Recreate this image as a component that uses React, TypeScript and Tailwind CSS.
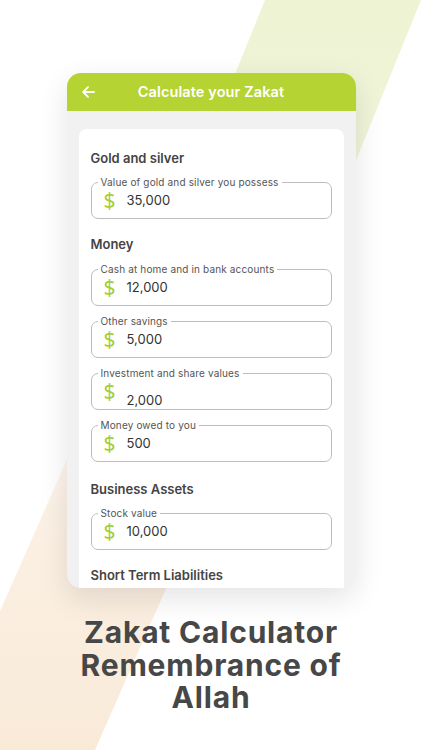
import React from "react";

const font = { fontFamily: "Inter, 'Noto Sans', sans-serif" };

function Dollar() {
  return (
    <span className="text-[21px] leading-none text-[#a6cd37] font-normal" style={{ fontFamily: "'Noto Sans', Inter, sans-serif" }}>
      $
    </span>
  );
}

function Field({ label, value, low, className = "" }: { label: string; value: string; low?: boolean; className?: string }) {
  return (
    <div className={`relative h-[37px] rounded-[7px] border border-[#bdbdbd] flex items-center pl-[12px] ${className}`}>
      <span className="absolute left-[6px] top-[-8px] bg-white px-[3px] text-[10px] leading-[14px] tracking-[0.15px] text-[#555555]">
        {label}
      </span>
      <Dollar />
      <span className={`ml-[11px] text-[13px] text-[#333333] ${low ? "mt-[19px]" : ""}`}>{value}</span>
    </div>
  );
}

function Heading({ children, className = "" }: { children: React.ReactNode; className?: string }) {
  return (
    <div className={`h-[18px] leading-[18px] text-[13px] font-semibold text-[#444444] ${className}`}>{children}</div>
  );
}

export default function App() {
  return (
    <div className="relative w-[422px] h-[750px] overflow-hidden bg-white" style={font}>
      <svg className="absolute inset-0" width="422" height="750" viewBox="0 0 422 750">
        <defs>
          <linearGradient id="g1" x1="0" y1="0" x2="0" y2="1" gradientUnits="objectBoundingBox">
            <stop offset="0" stopColor="#eef3d3" />
            <stop offset="0.45" stopColor="#f1f5dc" />
            <stop offset="1" stopColor="#ffffff" stopOpacity="0" />
          </linearGradient>
          <linearGradient id="g2" x1="0" y1="0" x2="0" y2="1" gradientUnits="objectBoundingBox">
            <stop offset="0" stopColor="#fbeedf" stopOpacity="0" />
            <stop offset="0.3" stopColor="#fbeee0" stopOpacity="0.85" />
            <stop offset="1" stopColor="#f9ead8" />
          </linearGradient>
        </defs>
        <polygon points="265,0 421,0 259,400 103,400" fill="url(#g1)" />
        <polygon points="93,400 249,400 95,750 -61,750" fill="url(#g2)" />
      </svg>

      <div className="relative flex flex-col items-center pt-[73px]">
        <div className="w-[289px] h-[515px] rounded-[14px] overflow-hidden bg-[#f1f1f1] shadow-[0_10px_30px_rgba(0,0,0,0.11)] flex flex-col">
          <div className="h-[38px] bg-[#b5d433] flex items-center relative shrink-0">
            <svg className="absolute left-[15px] top-[13px]" width="13" height="12" viewBox="0 0 13 12" fill="none">
              <path d="M12 6H1.5M6 1.2L1.2 6L6 10.8" stroke="white" strokeWidth="1.8" strokeLinecap="round" strokeLinejoin="round" />
            </svg>
            <div className="w-full text-center text-white text-[14.5px] font-semibold tracking-[0.1px]">Calculate your Zakat</div>
          </div>
          <div className="flex-1 px-[12px] pt-[18px] flex flex-col">
            <div className="flex-1 bg-white rounded-t-[8px] px-[12px] pt-[20px] flex flex-col">
              <Heading>Gold and silver</Heading>
              <Field className="mt-[15px]" label="Value of gold and silver you possess" value="35,000" />
              <Heading className="mt-[16px]">Money</Heading>
              <Field className="mt-[16px]" label="Cash at home and in bank accounts" value="12,000" />
              <Field className="mt-[15px]" label="Other savings" value="5,000" />
              <Field className="mt-[15px]" label="Investment and share values" value="2,000" low />
              <Field className="mt-[15px]" label="Money owed to you" value="500" />
              <Heading className="mt-[18px]">Business Assets</Heading>
              <Field className="mt-[15px]" label="Stock value" value="10,000" />
              <Heading className="mt-[16px]">Short Term Liabilities</Heading>
            </div>
          </div>
        </div>

        <div className="mt-[28px] text-center text-[#474747] font-bold text-[30px] leading-[32.5px] tracking-[0.8px]">
          <div>Zakat Calculator</div>
          <div>Remembrance of</div>
          <div>Allah</div>
        </div>
      </div>
    </div>
  );
}
